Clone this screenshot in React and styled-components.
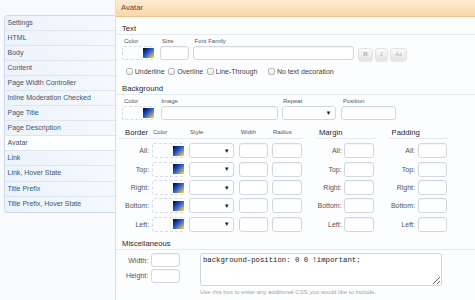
import React from 'react';
import styled, { createGlobalStyle } from 'styled-components';

const GlobalStyle = createGlobalStyle`
  * { box-sizing: border-box; }
  html, body { margin: 0; padding: 0; background: #f8fafd; }
  body { font-family: "Liberation Sans", Arial, sans-serif; color: #333; }
`;

const Page = styled.div`
  display: flex;
  width: 475px;
  height: 300px;
  overflow: hidden;
`;

const Sidebar = styled.ul`
  list-style: none;
  margin: 15px 0 0 4px;
  padding: 0;
  width: 111px;
  flex: none;
  align-self: flex-start;
  border: 1px solid #cddbe9;
  border-right: none;
  border-radius: 4px 0 0 4px;
  background: linear-gradient(to right, #edf3fa, #f5f9fd);
  overflow: hidden;
`;

const Tab = styled.li`
  height: 15.05px;
  line-height: 14px;
  padding-left: 2.5px;
  font-size: 7px;
  color: #3d566c;
  white-space: nowrap;
  border-bottom: 1px solid #dce6f0;
  background: ${p => (p.$active ? '#fdfeff' : 'transparent')};
  &:last-child { border-bottom: none; }
`;

const Main = styled.div`
  flex: 1;
  min-width: 0;
  border-left: 1px solid #d3e0ec;
  background: #fcfdfe;
`;

const Header = styled.div`
  height: 17px;
  padding-left: 5px;
  line-height: 16px;
  font-size: 7.7px;
  color: #5e4a30;
  background: linear-gradient(to bottom, #fdebd2, #f9d7a8);
  border-bottom: 1px solid #efc38a;
`;

const Heading = styled.div`
  margin-top: ${p => p.$top}px;
  padding-left: 6px;
  height: 11px;
  line-height: 10px;
  font-size: 7.7px;
  color: #2a2a2a;
  border-bottom: 1px solid #e3e9ef;
`;

const FieldRow = styled.div`
  display: flex;
  align-items: flex-start;
  margin-top: 2px;
  padding-left: 6px;
`;

const Field = styled.div`
  display: flex;
  flex-direction: column;
  margin-left: ${p => p.$gap || 0}px;
`;

const Label = styled.span`
  height: 9px;
  line-height: 8px;
  padding-left: ${p => p.$pad ?? 2}px;
  font-size: 6px;
  color: #555;
  white-space: nowrap;
`;

const Input = styled.input`
  display: block;
  width: ${p => p.$w}px;
  height: ${p => p.$h || 14}px;
  margin: 0;
  padding: 0;
  border: 1px solid #d0d7df;
  border-radius: 3px;
  background: #fff;
  box-shadow: inset 0 1px 1px rgba(0, 0, 0, 0.04);
`;

const ColorBox = styled.div`
  width: 33px;
  height: ${p => p.$h || 14}px;
  display: flex;
  align-items: center;
  justify-content: flex-end;
  padding-right: 1px;
  border: 1px dashed #d7dce2;
  border-right: none;
  border-radius: 2px;
`;

const Swatch = styled.span`
  width: 11px;
  height: 10px;
  background: linear-gradient(135deg, #0a0a30 5%, #2156d4 45%, #f3d23a 95%);
`;

const SelectBox = styled.div`
  width: ${p => p.$w}px;
  height: ${p => p.$h || 14}px;
  display: flex;
  align-items: center;
  justify-content: flex-end;
  padding-right: 3.5px;
  border: 1px solid #d0d7df;
  border-radius: 3px;
  background: #fff;
  font-size: 6px;
  color: #222;
`;

const StyleButtons = styled.div`
  display: flex;
  gap: 2px;
  margin: 11px 0 0 4px;
`;

const StyleButton = styled.button`
  width: ${p => p.$w}px;
  height: 13px;
  padding: 0;
  border: 1px solid #e2e2e2;
  border-radius: 3px;
  background: linear-gradient(#fbfbfb, #e4e4e4);
  box-shadow: 0 1px 1px rgba(0, 0, 0, 0.08);
  color: #b3b3b3;
  font-family: "Liberation Serif", serif;
  font-size: ${p => p.$size || 7}px;
  font-weight: ${p => (p.$bold ? 'bold' : 'normal')};
  font-style: ${p => (p.$italic ? 'italic' : 'normal')};
  line-height: 11px;
`;

const CheckRow = styled.div`
  display: flex;
  align-items: center;
  margin-top: 5px;
  padding-left: 9.7px;
  height: 11px;
  gap: 3.5px;
`;

const Check = styled.label`
  display: flex;
  align-items: center;
  gap: 2px;
  margin-left: ${p => p.$extra || 0}px;
  font-size: 7px;
  color: #444;
  white-space: nowrap;
`;

const CheckBox = styled.span`
  width: 7px;
  height: 7px;
  border: 1px solid #b8b8b8;
  border-radius: 2px;
  background: linear-gradient(#fff, #e8e8e8);
`;

const BoxRow = styled.div`
  display: flex;
  align-items: flex-start;
  margin-top: 8px;
  padding-left: 2px;
`;

const BoxGroup = styled.div`
  display: grid;
  grid-template-columns: ${p => p.$cols};
  row-gap: 3.3px;
  margin-left: ${p => p.$offset || 0}px;
`;

const GroupHead = styled.div`
  grid-column: 1 / -1;
  display: grid;
  grid-template-columns: ${p => p.$cols};
  align-items: center;
  height: 11px;
  margin-bottom: 1.7px;
  border-bottom: 1px solid #e3e9ef;
`;

const GroupTitle = styled.span`
  grid-column: ${p => p.$span || 'auto'};
  padding-left: ${p => p.$pad}px;
  font-size: 7.7px;
  line-height: 10px;
  color: #2a2a2a;
`;

const RowLabel = styled.span`
  align-self: center;
  padding-right: 2.6px;
  text-align: right;
  font-size: 7px;
  color: #555;
  white-space: nowrap;
`;

const MiscBody = styled.div`
  display: flex;
  align-items: flex-start;
  margin-top: 3px;
`;

const MiscGrid = styled.div`
  display: grid;
  grid-template-columns: 34.7px 29.6px;
  row-gap: 1.6px;
`;

const CssColumn = styled.div`
  margin-left: 19.7px;
`;

const CssArea = styled.textarea`
  display: block;
  width: 241.7px;
  height: 32.6px;
  margin: 0;
  padding: 2px 2px;
  border: 1px solid #d0d7df;
  border-radius: 3px;
  background: #fff;
  font-family: "Liberation Mono", "Courier New", monospace;
  font-size: 7.3px;
  line-height: 9px;
  color: #222;
  outline: none;
`;

const Help = styled.div`
  margin-top: 2.7px;
  font-size: 6px;
  line-height: 8px;
  color: #a5a5a5;
  white-space: nowrap;
`;

const tabs = [
  'Settings', 'HTML', 'Body', 'Content', 'Page Width Controller',
  'Inline Moderation Checked', 'Page Title', 'Page Description', 'Avatar',
  'Link', 'Link, Hover State', 'Title Prefix', 'Title Prefix, Hover State',
];

const sides = ['All:', 'Top:', 'Right:', 'Bottom:', 'Left:'];

const borderCols = '33.7px 37.6px 49.7px 32.7px 31.3px';
const marginCols = '27.6px 31.7px';
const paddingCols = '29.7px 31.3px';

function App() {
  return (
    <>
      <GlobalStyle />
      <Page>
        <Sidebar>
          {tabs.map(t => (
            <Tab key={t} $active={t === 'Avatar'}>{t}</Tab>
          ))}
        </Sidebar>
        <Main>
          <Header>Avatar</Header>

          <Heading $top={6.5}>Text</Heading>
          <FieldRow>
            <Field>
              <Label>Color</Label>
              <ColorBox><Swatch /></ColorBox>
            </Field>
            <Field $gap={5}>
              <Label>Size</Label>
              <Input $w={29.3} />
            </Field>
            <Field $gap={3.7}>
              <Label $pad={1.5}>Font Family</Label>
              <Input $w={161} />
            </Field>
            <StyleButtons>
              <StyleButton $w={14.7} $bold>B</StyleButton>
              <StyleButton $w={13.3} $italic>I</StyleButton>
              <StyleButton $w={17} $size={6}>Aa</StyleButton>
            </StyleButtons>
          </FieldRow>
          <CheckRow>
            <Check><CheckBox />Underline</Check>
            <Check><CheckBox />Overline</Check>
            <Check><CheckBox />Line-Through</Check>
            <Check $extra={7}><CheckBox />No text decoration</Check>
          </CheckRow>

          <Heading $top={7}>Background</Heading>
          <FieldRow>
            <Field>
              <Label>Color</Label>
              <ColorBox><Swatch /></ColorBox>
            </Field>
            <Field $gap={5.7}>
              <Label $pad={0.5}>Image</Label>
              <Input $w={117} />
            </Field>
            <Field $gap={4.6}>
              <Label $pad={0.7}>Repeat</Label>
              <SelectBox $w={53.7}>▼</SelectBox>
            </Field>
            <Field $gap={5}>
              <Label>Position</Label>
              <Input $w={54.7} />
            </Field>
          </FieldRow>

          <BoxRow>
            <BoxGroup $cols={borderCols}>
              <GroupHead $cols={borderCols}>
                <GroupTitle $pad={7}>Border</GroupTitle>
                <Label $pad={1.3}>Color</Label>
                <Label $pad={0.7}>Style</Label>
                <Label $pad={1.7}>Width</Label>
                <Label $pad={1.3}>Radius</Label>
              </GroupHead>
              {sides.map(s => (
                <React.Fragment key={s}>
                  <RowLabel>{s}</RowLabel>
                  <ColorBox $h={15}><Swatch /></ColorBox>
                  <SelectBox $w={45} $h={15}>▼</SelectBox>
                  <Input $w={29.3} $h={15} />
                  <Input $w={30} $h={15} />
                </React.Fragment>
              ))}
            </BoxGroup>

            <BoxGroup $cols={marginCols} $offset={13.7}>
              <GroupHead $cols={marginCols}>
                <GroupTitle $span="1 / -1" $pad={2.3}>Margin</GroupTitle>
              </GroupHead>
              {sides.map(s => (
                <React.Fragment key={s}>
                  <RowLabel>{s}</RowLabel>
                  <Input $w={30} $h={15} />
                </React.Fragment>
              ))}
            </BoxGroup>

            <BoxGroup $cols={paddingCols} $offset={12}>
              <GroupHead $cols={paddingCols}>
                <GroupTitle $span="1 / -1" $pad={3.7}>Padding</GroupTitle>
              </GroupHead>
              {sides.map(s => (
                <React.Fragment key={s}>
                  <RowLabel>{s}</RowLabel>
                  <Input $w={29.6} $h={15} />
                </React.Fragment>
              ))}
            </BoxGroup>
          </BoxRow>

          <Heading $top={7.5}>Miscellaneous</Heading>
          <MiscBody>
            <MiscGrid>
              <RowLabel>Width:</RowLabel>
              <Input $w={29.6} />
              <RowLabel>Height:</RowLabel>
              <Input $w={29.6} />
            </MiscGrid>
            <CssColumn>
              <CssArea defaultValue="background-position: 0 0 !important;" />
              <Help>Use this box to enter any additional CSS you would like to include.</Help>
            </CssColumn>
          </MiscBody>
        </Main>
      </Page>
    </>
  );
}

export default App;
